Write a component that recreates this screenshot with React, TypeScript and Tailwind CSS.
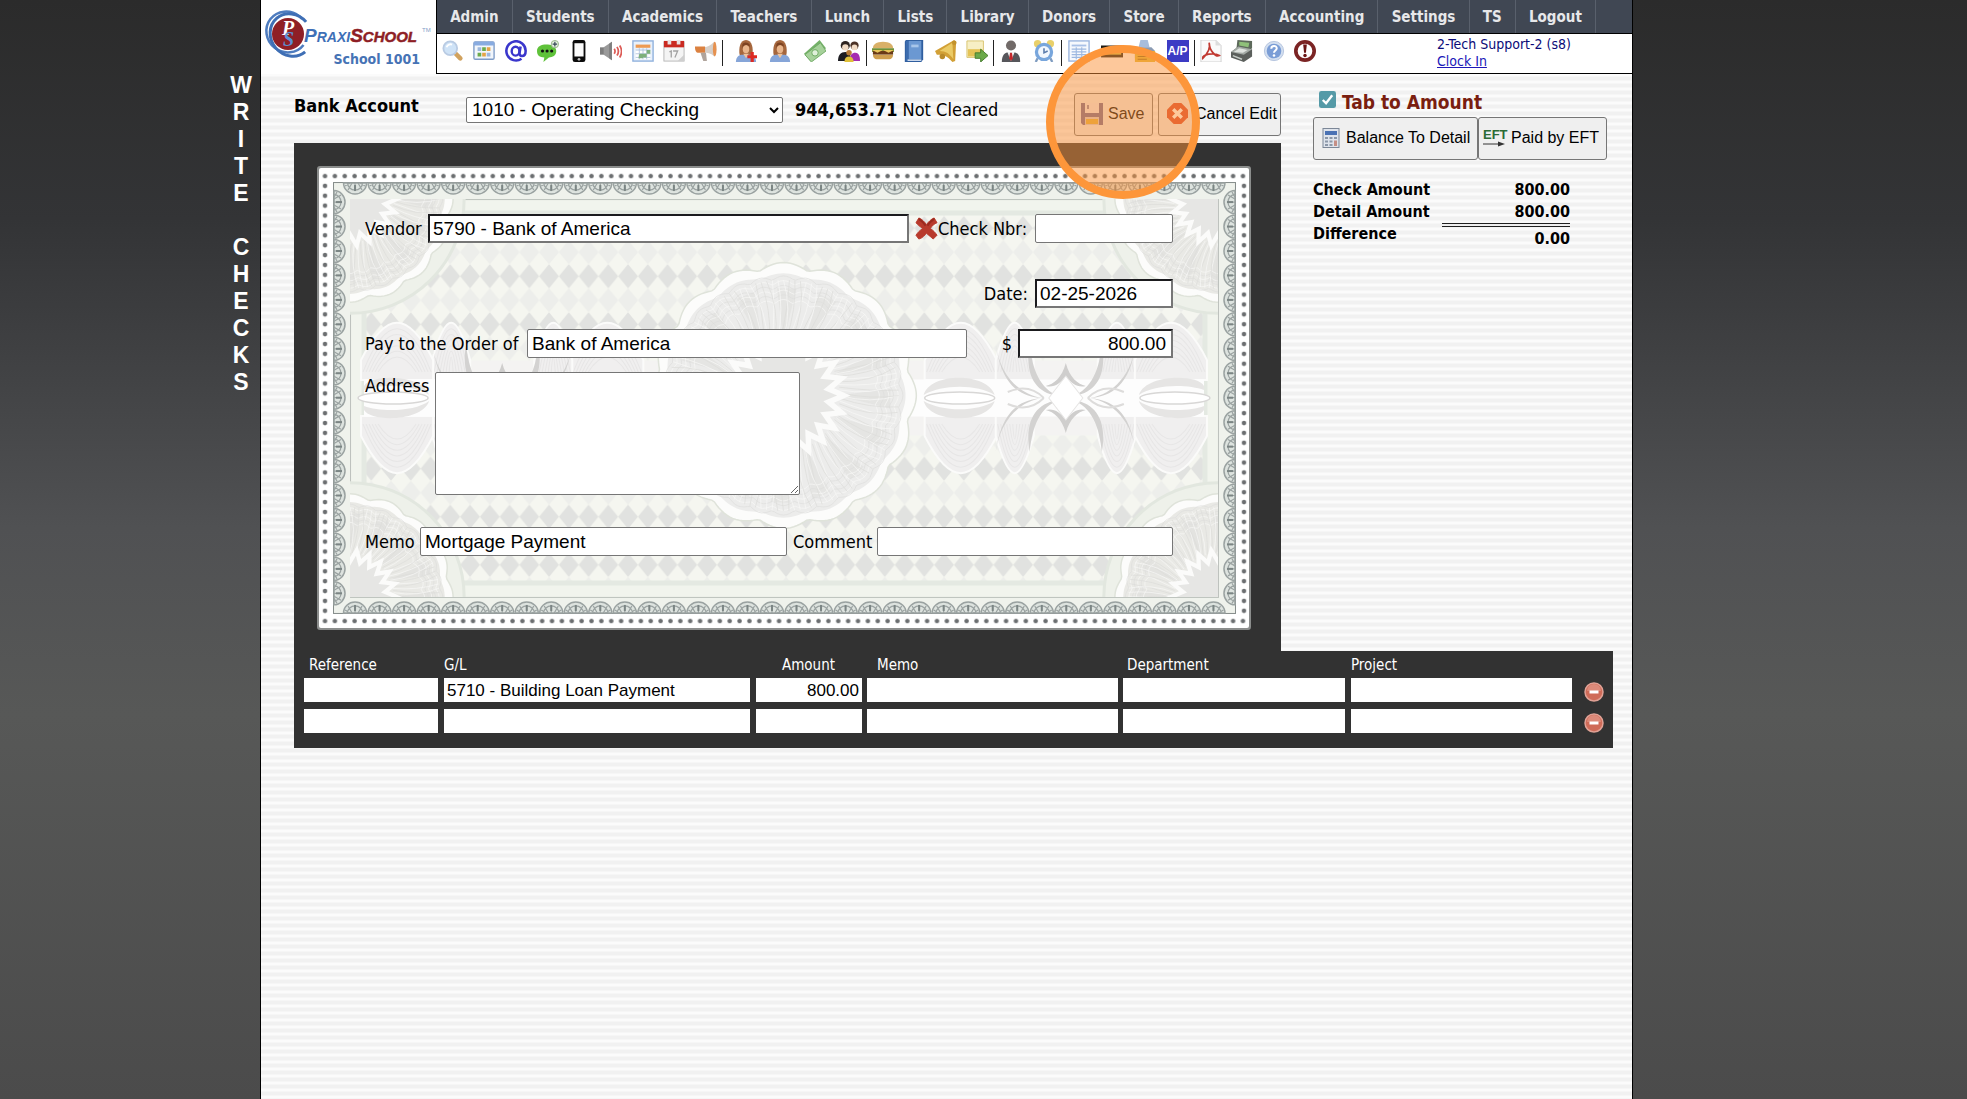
import React from "react";

const TAHOMA = "font-['DejaVu_Sans_Condensed','DejaVu_Sans',sans-serif]";
const ARIAL = "font-['Liberation_Sans',Arial,sans-serif]";

const NAV = [
  "Admin", "Students", "Academics", "Teachers", "Lunch", "Lists", "Library",
  "Donors", "Store", "Reports", "Accounting", "Settings", "TS", "Logout",
];

function Svg({ children, size = 24 }: { children: React.ReactNode; size?: number }) {
  return (
    <svg viewBox={`0 0 ${size} ${size}`} className="block h-[22px] w-[22px]" aria-hidden="true">
      {children}
    </svg>
  );
}

const Woman = ({ plus }: { plus?: boolean }) => (
  <Svg>
    <path d="M5 16C4 10 5 0 12 0s8 10 7 16c-3 2-11 2-14 0z" fill="#a5663c" />
    <path d="M1 24c0-6 4-8 7-8h8c3 0 7 2 7 8z" fill="#86a5d8" />
    <path d="M9 15h6l-3 5z" fill="#f0c49c" />
    <ellipse cx="12" cy="10" rx="3.500" ry="4.500" fill="#e9b68c" />
    <path d="M8 9c1-4 6-5 8-1V5c-2-3-7-3-8 0z" fill="#7d4322" />
    {plus && <path d="M17 13h3.500v3.500H24v3.500h-3.500V24H17v-4h-3.500v-3.500H17z" fill="#dc2a22" />}
  </Svg>
);

const icons: Record<string, React.ReactNode> = {
  Search: (
    <Svg>
      <path d="M15 15l5 5" stroke="#d1a25e" strokeWidth="5" strokeLinecap="round" />
      <circle cx="9" cy="9" r="7.500" fill="#cfe3f7" stroke="#b9cbe3" strokeWidth="2" />
      <path d="M5 8c1-3 4-4 6-3" stroke="#fff" strokeWidth="2" fill="none" />
    </Svg>
  ),
  Schedule: (
    <Svg>
      <rect x="1" y="2" width="22" height="19" rx="1.500" fill="#f2f6fb" stroke="#7f9cc7" strokeWidth="1.500" />
      <path d="M1 2h22v4H1z" fill="#88abe0" />
      <path d="M5 8h4v4H5zM15 14h4v4h-4z" fill="#9db7dd" />
      <path d="M10 8h4v4h-4zM5 14h4v4H5z" fill="#6cab4d" />
      <path d="M15 8h4v4h-4zM10 14h4v4h-4z" fill="#e5a447" />
    </Svg>
  ),
  Email: (
    <Svg>
      <path d="M18 20.500A10.500 10.500 0 1 1 22.500 12c0 4-2 5.500-4 5.500S15.500 16 16 13l1-6" fill="none" stroke="#3a36cc" strokeWidth="2.800" />
      <ellipse cx="11.500" cy="12.200" rx="4.200" ry="4.800" fill="none" stroke="#3a36cc" strokeWidth="2.600" />
    </Svg>
  ),
  Message: (
    <Svg>
      <path d="M0 12c0-5 5-7 10-7s11 2 11 7-4 7-8 7l-6 5 1-5c-5 0-8-2-8-7z" fill="#5fc23a" />
      <circle cx="6" cy="12" r="1.700" fill="#111" /><circle cx="11" cy="12" r="1.700" fill="#111" /><circle cx="16" cy="12" r="1.700" fill="#111" />
      <circle cx="19.500" cy="4.500" r="4" fill="#e8f3e2" stroke="#8fb182" />
      <path d="M19.500 2v5M17 4.500h5" stroke="#345" strokeWidth="1.300" />
    </Svg>
  ),
  Phone: (
    <Svg>
      <rect x="5" y="0" width="14" height="24" rx="2.500" fill="#0b0b0b" />
      <path d="M7 3.500h10V18H7z" fill="#fbfbfb" />
      <circle cx="12" cy="21" r="1.500" fill="#bbb" />
    </Svg>
  ),
  Sound: (
    <Svg>
      <path d="M0 8h5v8H0z" fill="#7d7d7d" />
      <path d="M4 8l9-6v20l-9-6z" fill="#9a9a9a" />
      <path d="M10 4l3-2v20l-3-2z" fill="#7f7f7f" />
      <path d="M15.500 9.500c1 1.500 1 4 0 5.500M18.500 7.500c2 3 2 6.500 0 9.500M21.500 6c2.500 4 2.500 9 0 13" stroke="#dc5b56" strokeWidth="1.900" fill="none" />
    </Svg>
  ),
  Planner: (
    <Svg>
      <rect x="1" y="1" width="22" height="22" fill="#e9f1fb" stroke="#8fb0dc" strokeWidth="1.500" />
      <path d="M4 5h16v3.500H4z" fill="#ee9a52" />
      <path d="M4 11h16v10H4z" fill="#fff" />
      <path d="M4 11h16M4 15h16M4 19h16M8 9v12M12 9v12M16 9v12" stroke="#b2c4de" />
      <path d="M16 11h4v4h-4v4h-4v-4h4zM8 15h4v5H7z" fill="#7eb07c" />
    </Svg>
  ),
  Calendar: (
    <Svg>
      <rect x="1" y="2" width="22" height="21" fill="#f4f4f4" stroke="#b5b5b5" />
      <path d="M1 1h22v7H1z" fill="#ca2a21" />
      <path d="M5 0h4v5H5zM15 0h4v5h-4z" fill="#e9e2e2" />
      <path d="M7 13l2-1v7M11 12h5l-3 7" fill="none" stroke="#a2a2a2" strokeWidth="1.400" />
      <path d="M23 16v7h-7z" fill="#cfcfcf" />
    </Svg>
  ),
  Announce: (
    <Svg>
      <path d="M21 2c3 2 3 13 0 16-4-4-8-4-12-4V8c4 0 8-2 12-6z" fill="#d6cfc9" />
      <path d="M0 7h11v7H3c-3-1-3-5-3-7z" fill="#db8140" />
      <ellipse cx="21.500" cy="10" rx="2" ry="8" fill="#e6914f" />
      <path d="M6 14h6l1 9H9z" fill="#b0a49c" />
    </Svg>
  ),
  "Add student": <Woman plus />,
  Student: <Woman />,
  Cash: (
    <Svg>
      <path d="M0 15L17 0l7 9L7 23z" fill="#74b168" />
      <path d="M1 16L18 3l6 9L8 24z" fill="#a6d19a" stroke="#6fa964" />
      <circle cx="12" cy="14" r="3.500" fill="#e0f0da" stroke="#6aa85e" />
    </Svg>
  ),
  Family: (
    <Svg>
      <circle cx="8" cy="6" r="5" fill="#2e2420" /><circle cx="18" cy="6" r="4.500" fill="#4b3226" />
      <circle cx="8" cy="8" r="3.500" fill="#f2dcc6" /><circle cx="18" cy="8" r="3.200" fill="#f2dcc6" />
      <path d="M0 23c0-7 3-10 8-10s6 3 6 10z" fill="#1d1d22" />
      <path d="M13 23c0-7 2-9 6-9s5 4 5 9z" fill="#a52cb0" />
      <circle cx="12" cy="14" r="3" fill="#b87a35" />
      <path d="M7 24c0-4 2-6 5-6s5 2 5 6z" fill="#dfc03a" />
    </Svg>
  ),
  Lunch: (
    <Svg>
      <path d="M1 9c0-4 4-7 11-7s11 3 11 7z" fill="#d9b068" />
      <path d="M0 9h24v4H0z" fill="#6f8f35" />
      <path d="M1 12h22v4H1z" fill="#6a3a17" />
      <path d="M0 11l6 3 6-3 6 3 6-3z" fill="#e8c65a" />
      <path d="M1 16h22c0 3-2 5-4 5H5c-2 0-4-2-4-5z" fill="#cf9f4f" />
    </Svg>
  ),
  Book: (
    <Svg>
      <path d="M3 0h19v21l-2 3H2V2z" fill="#2f5e9f" />
      <path d="M6 1h14v20H6z" fill="#6b98d2" />
      <path d="M3 1h3v22H3z" fill="#3c6cae" />
      <path d="M9 5h8v3H9z" fill="#a8c6ea" />
      <path d="M5 22h15" stroke="#e6eefa" strokeWidth="1.500" />
    </Svg>
  ),
  Bell: (
    <Svg>
      <path d="M21 0L0 12l2 4c8 0 12 2 17 8l3-1 1-20z" fill="#d2a036" />
      <path d="M19 3L5 12c7 0 11 3 15 9z" fill="#ebcb66" />
      <circle cx="21" cy="3" r="2.500" fill="#c2922c" />
      <circle cx="8" cy="18" r="3" fill="#b98a2a" />
    </Svg>
  ),
  Forward: (
    <Svg>
      <path d="M1 1h18v18H1z" fill="#f7efc4" stroke="#d8c26c" />
      <path d="M2 10h16v8H2z" fill="#e5c356" />
      <path d="M10 14h6v-4l8 7-8 7v-4h-6z" fill="#6ba94a" stroke="#43792a" />
    </Svg>
  ),
  Staff: (
    <Svg>
      <circle cx="12" cy="6" r="5.500" fill="#716a68" />
      <path d="M2 24c0-8 3-11 10-11s10 3 10 11z" fill="#56565b" />
      <path d="M8 13h8l-4 10z" fill="#f1f1f1" /><path d="M11 14h2l1 6-2 3-2-3z" fill="#c5272b" />
    </Svg>
  ),
  Clock: (
    <Svg>
      <circle cx="5" cy="4" r="4" fill="#e9d06a" /><circle cx="19" cy="4" r="4" fill="#e9d06a" />
      <path d="M5 20l-2 4M19 20l2 4" stroke="#7f9cc0" strokeWidth="2.500" />
      <circle cx="12" cy="13" r="10" fill="#78a6dc" /><circle cx="12" cy="13" r="6.500" fill="#f2f7fd" />
      <path d="M12 9v5l4-2" stroke="#5a7bab" strokeWidth="1.700" fill="none" />
    </Svg>
  ),
  Ledger: (
    <Svg>
      <rect x="1" y="1" width="22" height="22" fill="#f6f9fd" stroke="#9bb5de" strokeWidth="1.500" />
      <path d="M4 5h16v2H4z" fill="#a9c1e6" />
      <path d="M4 10h16M4 13h16M4 16h16M4 19h16M9 8v13M15 8v13" stroke="#9db8e0" strokeWidth="1.200" />
    </Svg>
  ),
  Checks: (
    <Svg>
      <path d="M0 6h24v13H0z" fill="#1c1a12" /><path d="M2 9h20v7H2z" fill="#d8bf48" />
      <path d="M4 11h12M4 14h8" stroke="#8a6d20" />
    </Svg>
  ),
  "Print checks": (
    <Svg>
      <path d="M5 8l2-8h8l2 8z" fill="#a8bddb" /><path d="M1 8h18l4 4v8H1z" fill="#8b9bb3" />
      <path d="M1 12h22v12H1z" fill="#e3b838" /><path d="M4 15h14M4 18h17M4 21h10" stroke="#8e6a1b" strokeWidth="1.200" />
    </Svg>
  ),
  "Accounts payable": (
    <span className={`flex h-[22px] w-[22px] items-center justify-center bg-[#3c3bc4] text-[12px] font-bold text-white ${ARIAL}`}>A/P</span>
  ),
  PDF: (
    <Svg>
      <path d="M1 0h16l6 6v18H1z" fill="#fafafa" stroke="#cfcfcf" />
      <path d="M17 0v6h6z" fill="#ddd" />
      <path d="M10 3c2 6-3 13-7 17-1-4 12-7 18-3-4 2-11-6-11-14z" fill="none" stroke="#c13931" strokeWidth="1.900" />
    </Svg>
  ),
  Register: (
    <Svg>
      <path d="M7 0l16 1v8l-4 3-13-3z" fill="#5d695b" /><path d="M9 2l11 1-1 5-10-2z" fill="#8fc07a" />
      <path d="M0 13l8-6 15 3v8l-9 6-14-5z" fill="#5b5f5c" /><path d="M0 13l8-6 15 3-9 6z" fill="#a3aaa5" />
      <path d="M3 13l6-4 9 2-5 3z" fill="#dfe3df" /><path d="M2 17l10 4" stroke="#c6cdc8" strokeWidth="1.500" />
    </Svg>
  ),
  Help: (
    <Svg>
      <circle cx="12" cy="12" r="10.500" fill="#d3dff0" stroke="#b3c3dd" /><circle cx="12" cy="12" r="8" fill="#7a9dd6" />
      <path d="M9 9.500c0-4 6-4 6-.5 0 2.500-3 2.500-3 5" stroke="#fff" strokeWidth="2.200" fill="none" /><circle cx="12" cy="17" r="1.400" fill="#fff" />
    </Svg>
  ),
  Alert: (
    <Svg>
      <circle cx="12" cy="12" r="10" fill="#fff" stroke="#7b2424" strokeWidth="4" />
      <path d="M10 5h4l-1 9h-2z" fill="#6b1515" /><circle cx="12" cy="17" r="1.900" fill="#6b1515" />
    </Svg>
  ),
};

const TOOL_GROUPS: { width: string; names: string[] }[] = [
  { width: "w-[286px]", names: ["Search", "Schedule", "Email", "Message", "Phone", "Sound", "Planner", "Calendar", "Announce"] },
  { width: "w-36 pl-1.5", names: ["Add student", "Student", "Cash", "Family"] },
  { width: "w-[127px]", names: ["Lunch", "Book", "Bell", "Forward"] },
  { width: "w-[68px]", names: ["Staff", "Clock"] },
  { width: "w-[133px]", names: ["Ledger", "Checks", "Print checks", "Accounts payable"] },
  { width: "w-[126px]", names: ["PDF", "Register", "Help", "Alert"] },
];

function Logo() {
  return (
    <a href="#home" className="flex h-[74px] w-44 shrink-0 flex-col border-r border-black bg-white">
      <svg viewBox="0 0 175 52" className="mt-2 h-[52px] w-full shrink-0" role="img" aria-label="PraxiSchool">
        <ellipse cx="26" cy="24" rx="21" ry="20" fill="none" stroke="#4e7cbf" strokeWidth="2.500" strokeDasharray="100 30" transform="rotate(38 26 24)" />
        <ellipse cx="30" cy="27" rx="22" ry="20" fill="none" stroke="#3f6fb5" strokeWidth="3" strokeDasharray="98 34" transform="rotate(50 30 27)" />
        <circle cx="27" cy="26" r="16" fill="#8f1f26" />
        <text x="21" y="27" fontSize="20" fontWeight="bold" fontStyle="italic" fontFamily="Liberation Serif, serif" fill="#fff">
          P<tspan x="22" y="38" fill="#5c8fd3">S</tspan>
        </text>
        <text x="43" y="34" fontSize="19" fontWeight="bold" fontStyle="italic" fontFamily="Liberation Sans, sans-serif" fill="#3f70b7">
          P<tspan fontSize="14">RAXI</tspan>
          <tspan fill="#8e1e25" stroke="#8e1e25" strokeWidth="0.500">S<tspan fontSize="15">CHOOL</tspan></tspan>
        </text>
        <text x="161" y="24" fontSize="6" fontFamily="Liberation Sans, sans-serif" fill="#7f9dc8">TM</text>
      </svg>
      <span className="-mt-[9px] block pr-4 text-right text-[14px] leading-4 font-bold text-[#4673b5]">School 1001</span>
    </a>
  );
}

function polar(cx: number, cy: number, r: number, a: number) {
  return `${(cx + r * Math.cos(a)).toFixed(1)} ${(cy + r * Math.sin(a)).toFixed(1)}`;
}

function wavy(cx: number, cy: number, r: number, amp: number, lobes: number) {
  const pts: string[] = [];
  for (let i = 0; i <= 240; i++) {
    const a = (i / 240) * Math.PI * 2;
    pts.push(polar(cx, cy, r + amp * Math.abs(Math.cos((a * lobes) / 2)), a));
  }
  return "M" + pts.join("L") + "Z";
}

function star(cx: number, cy: number, outer: number, inner: number, points: number) {
  const pts: string[] = [];
  for (let i = 0; i < points * 2; i++) {
    pts.push(polar(cx, cy, i % 2 ? inner : outer, (i / points) * Math.PI));
  }
  return "M" + pts.join("L") + "Z";
}

function Rosette({ cx, cy, r, tint }: { cx: number; cy: number; r: number; tint: string }) {
  const rings = Array.from({ length: 6 }, (_, i) => r * 0.86 - i * r * 0.035);
  const rays = Array.from({ length: 128 }, (_, i) => (i / 128) * Math.PI * 2);
  const wedges = Array.from({ length: 16 }, (_, i) => (i / 16) * Math.PI * 2);
  return (
    <g fill="none">
      <path d={wavy(cx, cy, r * 0.94, r * 0.05, 16)} fill="#fcfcfb" stroke="#dfe3da" strokeWidth="1.500" />
      <path d={wavy(cx, cy, r * 0.88, r * 0.03, 16)} fill={tint} />
      {wedges.map((a, i) => (
        <path key={i} d={`M${polar(cx, cy, r * 0.4, a)}L${polar(cx, cy, r * 0.8, a - 0.06)}L${polar(cx, cy, r * 0.8, a + 0.12)}Z`} fill="#dededc" opacity="0.5" />
      ))}
      {rings.map((q, i) => (
        <path key={i} d={wavy(cx, cy, q, r * 0.03, 32)} stroke={i % 2 ? "#f8f8f7" : "#dededc"} strokeWidth="0.700" />
      ))}
      {rays.map((a, i) => (
        <path key={i} d={`M${polar(cx, cy, r * 0.42, a)}Q${polar(cx, cy, r * 0.65, a + 0.1)} ${polar(cx, cy, r * 0.86, a + (i % 3) * 0.05)}`} stroke={i % 2 ? "#dcdcda" : "#f8f8f7"} strokeWidth="0.700" />
      ))}
      <path d={star(cx, cy, r * 0.5, r * 0.38, 22)} fill="#fbfbfa" />
      <path d={star(cx, cy, r * 0.4, r * 0.3, 22)} fill="#e6e6e4" />
    </g>
  );
}

function Dome({ x, w, flip }: { x: number; w: number; flip?: boolean }) {
  const y = (v: number) => (flip ? 231.5 + v : 231.5 - v);
  return (
    <g>
      <path d={`M${x - w - 2} ${y(38)}Q${x - w / 2} ${y(75)} ${x} ${y(75)}T${x + w + 2} ${y(38)}V${y(18)}H${x - w - 2}Z`} fill="#f0efef" stroke="#fbfbfa" strokeWidth="2" />
      {[40, 36, 32, 28, 24, 20].map((v, i) => (
        <path key={v} d={`M${x - w + i * 3} ${y(26)}Q${x} ${y(v * 2.8)} ${x + w - i * 3} ${y(26)}`} fill="none" stroke="#e7e6e6" />
      ))}
    </g>
  );
}

function Guilloche() {
  const domes: [number, number][] = [[643, 34], [697, 17], [799, 17], [853, 34]];
  const halves = [1, -1];
  return (
    <g>
      <path d="M590 194h296v75H590z" fill="#f4f3f2" />
      {domes.map(([x, w]) => <Dome key={x} x={x} w={w} />)}
      {domes.map(([x, w]) => <Dome key={x} x={x} w={w} flip />)}
      <path d="M590 213h296v37H590z" fill="#fdfdfd" />
      {halves.map((s) => (
        <g key={s} transform={`translate(0 231.5) scale(1 ${s})`}>
          <path d="M606-3C612-26 670-26 677-3 660-14 624-14 606-3zM821-3C828-24 880-24 886-12V-8C870-14 836-14 821-3z" fill="#e6e5e4" />
          <path d="M678-54C682-24 700-4 724 0 702-2 684-12 678-54zM712-54C714-30 722-8 742-2 720-4 706-20 712-54zM784-54C782-30 774-8 754-2 776-4 790-20 784-54zM818-54C814-24 796-4 772 0 794-2 812-12 818-54z" fill="#d3d2d1" />
          <path d="M748-35C744-20 736-14 728-12 736-10 742-14 748-22 754-14 760-10 768-12 760-14 752-20 748-35z" fill="#cfcecd" />
          <path d="M690-6C704-12 716-10 726 0M806-6C792-12 780-10 770 0" fill="none" stroke="#dddcdb" strokeWidth="2" />
        </g>
      ))}
      <ellipse cx="642" cy="231.500" rx="35" ry="6" fill="#fff" stroke="#d8d7d6" strokeWidth="1.500" />
      <ellipse cx="857" cy="231.500" rx="35" ry="6" fill="#fff" stroke="#d8d7d6" strokeWidth="1.500" />
      <path d="M731 231.500l17-22 17 22-17 22z" fill="#fff" stroke="#e6e5e4" />
    </g>
  );
}

function CheckArt() {
  const corners: [number, number][] = [[33, 33], [900, 33], [33, 430], [900, 430]];
  return (
    <svg viewBox="0 0 933 463" preserveAspectRatio="none" className="absolute inset-0 h-full w-full" aria-hidden="true">
      <defs>
        <pattern id="diamonds" width="19.730" height="48" patternUnits="userSpaceOnUse" x="4.900" y="-10">
          <path d="M0 0h20v48H0z" fill="#f5f6f0" />
          <path d="M9.865 12L19.730 24 9.865 36 0 24z" fill="#e1e2e0" />
          <path d="M9.865 -12L19.730 0 9.865 12 0 0zM9.865 36L19.730 48 9.865 60 0 48z" fill="#edeeeb" />
        </pattern>
        <pattern id="dotsX" width="9.860" height="10" patternUnits="userSpaceOnUse" x="3.500" y="5">
          <circle cx="4.500" cy="5" r="2.300" fill="#6b6e70" />
        </pattern>
        <pattern id="dotsBottom" width="9.860" height="10" patternUnits="userSpaceOnUse" x="3.500" y="449">
          <circle cx="4.500" cy="5" r="2.300" fill="#6b6e70" />
        </pattern>
        <pattern id="dotsY" width="10" height="9.860" patternUnits="userSpaceOnUse" x="3" y="5">
          <circle cx="5" cy="5" r="2.300" fill="#6b6e70" />
        </pattern>
        <pattern id="dotsRight" width="10" height="9.860" patternUnits="userSpaceOnUse" x="921" y="5">
          <circle cx="5" cy="5" r="2.300" fill="#6b6e70" />
        </pattern>
        <g id="scallop">
          <path d="M-11.500 0a11.500 11 0 0 0 23 0z" fill="#dde3df" stroke="#9aa2a1" strokeWidth="1.500" />
          <path d="M-7.500 0a7.500 7 0 0 0 15 0M0 0v8M-3 0l-4 7M3 0l4 7M-5 0l-5 3M5 0l5 3" fill="none" stroke="#9aa2a1" strokeWidth="1.200" />
          <path d="M0 2v6" stroke="#7b8584" strokeWidth="2" />
        </g>
        <clipPath id="field"><path d="M33 33h867v397H33z" /></clipPath>
      </defs>
      <rect width="933" height="463" rx="3" fill="#8b8d8c" />
      <rect x="2" y="2" width="929" height="459" rx="2" fill="#fff" />
      <path d="M3 5h926v10H3z" fill="url(#dotsX)" />
      <path d="M3 449h926v10H3z" fill="url(#dotsBottom)" />
      <path d="M3 14h10v435H3z" fill="url(#dotsY)" />
      <path d="M921 14h9v435h-9z" fill="url(#dotsRight)" />
      <rect x="16.500" y="16.500" width="901" height="430" fill="#eff2ec" stroke="#858c8a" />
      {Array.from({ length: 36 }, (_, i) => (
        <g key={i}>
          <use href="#scallop" transform={`translate(${38 + i * 24.5} 17)`} />
          <use href="#scallop" transform={`translate(${38 + i * 24.5} 446) scale(1 -1)`} />
        </g>
      ))}
      {Array.from({ length: 17 }, (_, i) => (
        <g key={i}>
          <use href="#scallop" transform={`translate(17 ${36 + i * 24.4}) rotate(-90)`} />
          <use href="#scallop" transform={`translate(917 ${36 + i * 24.4}) rotate(90)`} />
        </g>
      ))}
      <rect x="33.500" y="33.500" width="867" height="397" fill="#f1f4ed" stroke="#bcc1bc" />
      <g clipPath="url(#field)">
        <path d="M47 47h840v369H47z" fill="url(#diamonds)" stroke="#e4e9e2" strokeWidth="5" />
        <g><Guilloche /></g>
        <g transform="translate(933 0) scale(-1 1)"><Guilloche /></g>
        {corners.map(([x, y]) => (
          <g key={`${x}-${y}`}>
            <circle cx={x} cy={y} r="114" fill="#eef1ea" stroke="#e2e7df" strokeWidth="3" />
            <Rosette cx={x} cy={y} r={104} tint="#e9e9e5" />
          </g>
        ))}
        <Rosette cx={466} cy={229} r={134} tint="#ececeb" />
      </g>
    </svg>
  );
}

const field = `h-[29px] min-w-0 rounded-[2px] border border-[#767676] bg-white px-1 text-[19px] text-black ${ARIAL}`;
const insetField = `h-[29px] min-w-0 border-2 border-t-[#1b1b1e] border-l-[#1b1b1e] border-r-[#767676] border-b-[#767676] bg-white px-[3px] text-[19px] text-black ${ARIAL}`;
const button = `flex h-[43px] items-center rounded-[3px] border border-[#767676] bg-[#efefef] pb-0.5 text-[16px] text-black ${ARIAL}`;

function CheckForm() {
  return (
    <div className="relative pt-12 pr-[78px] pb-[74px] pl-12 text-[18px] text-black">
      <CheckArt />
      <div className="relative flex flex-col">
        <div className="flex items-center">
          <label htmlFor="vendor" className="w-[63px]">Vendor</label>
          <input id="vendor" className={`${insetField} flex-1`} defaultValue="5790 - Bank of America" />
          <button aria-label="Clear vendor" className="ml-1.5">
            <svg viewBox="0 0 24 24" className="h-[23px] w-[23px]" aria-hidden="true">
              <path d="M4 1c3 1 6 4 8 7 2-3 5-6 8-7l3 5c-3 1-5 3-7 6 3 2 5 4 7 7l-4 4c-2-2-5-4-7-6-2 2-4 5-8 6l-3-4c2-3 4-5 7-7-3-2-5-4-7-6z" fill="#b83a2c" stroke="#b83a2c" />
              <path d="M4 2c3 2 5 4 7 7M20 2c-3 2-5 4-7 7" stroke="#9a2a1f" strokeWidth="2" fill="none" />
            </svg>
          </button>
          <label htmlFor="nbr" className="w-[97px]">Check Nbr:</label>
          <input id="nbr" className={`${field} w-[138px]`} />
        </div>
        <div className="mt-9 flex items-center justify-end">
          <label htmlFor="date" className="pr-[7px]">Date:</label>
          <input id="date" className={`${insetField} w-[138px]`} defaultValue="02-25-2026" />
        </div>
        <div className="mt-[21px] flex items-center">
          <label htmlFor="payee" className="w-[162px]">Pay to the Order of</label>
          <input id="payee" className={`${field} flex-1`} defaultValue="Bank of America" />
          <label htmlFor="amount" className="ml-[35px] pr-1.5">$</label>
          <input id="amount" className={`${insetField} w-[155px] pr-[5px] text-right`} defaultValue="800.00" />
        </div>
        <div className="mt-3.5 flex items-start">
          <label htmlFor="address" className="w-[70px]">Address</label>
          <textarea id="address" className={`block h-[123px] w-[365px] rounded-[2px] border border-[#767676] bg-white ${ARIAL}`} />
        </div>
        <div className="mt-8 flex items-center">
          <label htmlFor="memo" className="w-[55px]">Memo</label>
          <input id="memo" className={`${field} w-[367px]`} defaultValue="Mortgage Payment" />
          <label htmlFor="comment" className="ml-1.5 w-[84px]">Comment</label>
          <input id="comment" className={`${field} flex-1`} />
        </div>
      </div>
    </div>
  );
}

const COLUMNS = [
  { name: "Reference", col: "w-[140px]", head: "pl-[5px] text-left", cell: "pr-1.5" },
  { name: "G/L", col: "w-[312px]", head: "text-left", cell: "pr-1.5" },
  { name: "Amount", col: "w-[111px]", head: "pr-8 text-right", cell: "pr-[5px]" },
  { name: "Memo", col: "w-auto", head: "pl-2.5 text-left", cell: "pr-[5px]" },
  { name: "Department", col: "w-[228px]", head: "pl-1 text-left", cell: "pr-1.5" },
  { name: "Project", col: "w-[221px]", head: "text-left", cell: "" },
];
const ROWS = [
  ["", "5710 - Building Loan Payment", "800.00", "", "", ""],
  ["", "", "", "", "", ""],
];

function DetailTable() {
  return (
    <div className="bg-[#323232] pb-2 pl-2.5">
      <table className="w-full table-fixed border-collapse">
        <colgroup>
          {COLUMNS.map((c) => <col key={c.name} className={c.col} />)}
          <col className="w-[41px]" />
        </colgroup>
        <thead>
          <tr className="h-[27px] text-[15px] text-white">
            {COLUMNS.map((c) => (
              <th key={c.name} scope="col" className={`p-0 pt-0.5 font-normal ${c.head}`}>{c.name}</th>
            ))}
            <td />
          </tr>
        </thead>
        <tbody>
          {ROWS.map((row, r) => (
            <tr key={r} className="h-[31px] align-top">
              {row.map((value, c) => (
                <td key={c} className={`p-0 ${COLUMNS[c].cell}`}>
                  <input
                    aria-label={`${COLUMNS[c].name} ${r + 1}`}
                    defaultValue={value}
                    className={`block h-6 w-full bg-white px-[3px] pt-0.5 text-[17px] text-black ${ARIAL} ${c === 2 ? "text-right" : ""}`}
                  />
                </td>
              ))}
              <td className="p-0 pt-1 pl-3">
                <button aria-label={`Remove row ${r + 1}`} className="block">
                  <svg viewBox="0 0 20 20" className="block h-5 w-5" aria-hidden="true">
                    <circle cx="10" cy="10" r="9" fill="#cf6b58" stroke="#e0a195" strokeWidth="1.500" />
                    <path d="M3 9a7 7 0 0 1 14 0z" fill="#dc8a7a" />
                    <path d="M5.500 8.500h9v3h-9z" fill="#fff" />
                  </svg>
                </button>
              </td>
            </tr>
          ))}
        </tbody>
      </table>
    </div>
  );
}

function SidePanel() {
  return (
    <aside className="flex flex-col items-start text-black">
      <div className="mt-4 flex h-[27px] items-center pl-1.5">
        <input id="tab" type="checkbox" defaultChecked className="peer sr-only" />
        <label htmlFor="tab" className="-mt-0.5 flex items-center gap-1.5 text-[19px] font-bold text-[#7a1e10]">
          <svg viewBox="0 0 18 18" className="-mt-1.5 h-[17px] w-[17px]" aria-hidden="true">
            <rect width="18" height="18" rx="2.500" fill="#559aa7" />
            <path d="M4 9.500l3.500 3.500L14 4.500" fill="none" stroke="#fff" strokeWidth="2.500" />
          </svg>
          Tab to Amount
        </label>
      </div>
      <div className="flex">
        <button className={`${button} w-[165px] gap-1.5 pl-2 whitespace-nowrap`}>
          <svg viewBox="0 0 18 20" className="h-5 w-[18px] shrink-0" aria-hidden="true">
            <rect x="1" y="0.500" width="16" height="19" fill="#dfe4ec" stroke="#7c8797" />
            <path d="M3 3h12v4H3z" fill="#4a72b4" />
            <path d="M3 9h3v2H3zM7.500 9h3v2h-3zM12 9h3v2h-3zM3 12.500h3v2H3zM7.500 12.500h3v2h-3zM3 16h3v2H3zM7.500 16h3v2h-3z" fill="#8b97a8" />
            <path d="M12 12.500h3V18h-3z" fill="#c58f86" />
          </svg>
          Balance To Detail
        </button>
        <button className={`${button} w-[129px] gap-1 pl-1 whitespace-nowrap`}>
          <span className="flex w-6 shrink-0 flex-col items-start">
            <span className="text-[13px] leading-[13px] font-bold text-[#2b6b35]">EFT</span>
            <svg viewBox="0 0 22 6" className="h-1.5 w-[22px]" aria-hidden="true">
              <path d="M0 3h16" stroke="#333" /><path d="M15 0.500l7 2.500-7 2.500z" fill="#333" />
            </svg>
          </span>
          Paid by EFT
        </button>
      </div>
      <dl className="mt-[19px] grid w-[257px] grid-cols-[129px_1fr] text-[16px] leading-[22px] font-bold">
        <dt>Check Amount</dt><dd className="text-right">800.00</dd>
        <dt>Detail Amount</dt><dd className="text-right">800.00</dd>
        <dt>Difference</dt>
        <dd className="h-1 border-y border-[#222] text-right"><span className="block pt-1">0.00</span></dd>
      </dl>
    </aside>
  );
}

export default function App() {
  return (
    <div className={`grid min-h-screen grid-cols-[260px_minmax(0,1fr)_334px] bg-[linear-gradient(#2b2b2b,#333436_20%,#505153_48%,#575857_65%,#4b4b4b)] ${TAHOMA}`}>
      <h1 className={`flex flex-col items-end pt-[72px] pr-[7px] text-[23px] leading-[27px] font-bold text-white ${ARIAL}`}>
        {"WRITE CHECKS".split("").map((ch, i) => (
          <span key={i} className="block h-[27px] w-6 text-center">{ch}</span>
        ))}
      </h1>

      <main className="border-x border-black bg-[repeating-linear-gradient(#f1f1f1_0px,#f1f1f1_3px,#fbfbfb_4px,#fbfbfb_6px,#f1f1f1_7px)]">
        <header className="flex h-[74px] border-b border-black bg-white">
          <Logo />
          <div className="flex min-w-0 flex-1 flex-col">
            <nav className="h-[34px] shrink-0 border-b border-black bg-[#404753] text-[15px] font-bold">
              <div className="flex h-full w-[1159px]">
                {NAV.map((n) => (
                  <a key={n} href={`#${n}`} className="flex h-full grow items-center justify-center border-r border-[#59606c] px-[13px] pt-0.5 text-[#e7e8ea]">{n}</a>
                ))}
              </div>
            </nav>
            <div className="flex flex-1 items-start pt-1.5">
              {TOOL_GROUPS.map((g, i) => (
                <div key={i} className={`flex h-[26px] shrink-0 items-start justify-around ${g.width} ${i < 5 ? "border-r border-[#222]" : ""}`}>
                  {g.names.map((n) => <button key={n} aria-label={n} title={n}>{icons[n]}</button>)}
                </div>
              ))}
              <div className="-mt-1 ml-[116px] flex flex-col text-[14px] leading-[17px] whitespace-nowrap text-[#0b0b78]">
                <span>2-Tech Support-2 (s8)</span>
                <a href="#clock" className="text-[#2018b8] underline">Clock In</a>
              </div>
            </div>
          </div>
        </header>

        <div className="pr-[19px] pl-[33px]">
          <div className="flex items-start">
            <div className="min-w-0 flex-1">
              <div className="flex h-[69px] items-center text-[18px] text-black">
                <label htmlFor="bank" className="-mt-1.5 w-[172px] font-bold">Bank Account</label>
                <select id="bank" className={`mt-0.5 h-[26px] w-[317px] rounded-[2px] border border-[#767676] bg-white pl-px text-[19px] ${ARIAL}`}>
                  <option>1010 - Operating Checking</option>
                </select>
                <span className="mt-0.5 ml-3 whitespace-nowrap"><b>944,653.71</b> Not Cleared</span>
                <div className="relative ml-auto flex gap-[5px] pt-3">
                  <button className={`${button} w-[79px] gap-[5px] pl-1.5`}>
                    <svg viewBox="0 0 22 22" className="h-[22px] w-[22px]" aria-hidden="true">
                      <path d="M0 0h22v22H2l-2-2z" fill="#6f6694" /><path d="M4 0h14v10H4z" fill="#eeeaf0" />
                      <path d="M6 2h2v4H6z" fill="#8d86a6" /><path d="M4 14h14v8H4z" fill="#d9cfcf" /><path d="M5 16h12v5H5z" fill="#e0b23c" />
                    </svg>
                    Save
                  </button>
                  <button className={`${button} w-[123px] gap-[7px] pl-2 whitespace-nowrap`}>
                    <svg viewBox="0 0 22 22" className="h-[21px] w-[21px] shrink-0" aria-hidden="true">
                      <path d="M7 0h8l7 7v8l-7 7H7l-7-7V7z" fill="#d8442c" />
                      <path d="M6.500 6.500l9 9M15.500 6.500l-9 9" stroke="#fff" strokeWidth="3.500" />
                    </svg>
                    Cancel Edit
                  </button>
                  <span className="pointer-events-none absolute -top-9 -left-7 z-10 h-[154px] w-[154px] rounded-full border-8 border-[#fd963a] bg-[#fc9137]/50" />
                </div>
              </div>
              <div className="bg-[#323232] pt-[23px] pr-[30px] pb-[21px] pl-[23px]">
                <CheckForm />
              </div>
            </div>
            <div className="w-[332px] shrink-0 pl-8">
              <SidePanel />
            </div>
          </div>
          <DetailTable />
        </div>
      </main>
      <div />
    </div>
  );
}
